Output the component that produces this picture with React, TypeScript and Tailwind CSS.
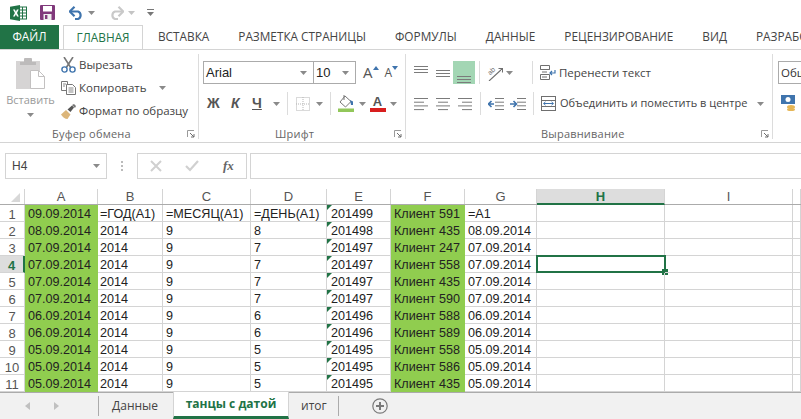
import React from "react";

const COLS = ["A", "B", "C", "D", "E", "F", "G", "H", "I", ""];
const colWidth = [
  "w-[73px]",
  "w-[65px]",
  "w-[88px]",
  "w-[76px]",
  "w-[64px]",
  "w-[74px]",
  "w-[72px]",
  "w-[128px]",
  "w-[128px]",
  "w-[8px]",
];

const ROWS = [
  ["09.09.2014", "=ГОД(A1)", "=МЕСЯЦ(A1)", "=ДЕНЬ(A1)", "201499", "Клиент 591", "=A1"],
  ["08.09.2014", "2014", "9", "8", "201498", "Клиент 435", "08.09.2014"],
  ["07.09.2014", "2014", "9", "7", "201497", "Клиент 247", "07.09.2014"],
  ["07.09.2014", "2014", "9", "7", "201497", "Клиент 558", "07.09.2014"],
  ["07.09.2014", "2014", "9", "7", "201497", "Клиент 435", "07.09.2014"],
  ["07.09.2014", "2014", "9", "7", "201497", "Клиент 590", "07.09.2014"],
  ["06.09.2014", "2014", "9", "6", "201496", "Клиент 588", "06.09.2014"],
  ["06.09.2014", "2014", "9", "6", "201496", "Клиент 589", "06.09.2014"],
  ["05.09.2014", "2014", "9", "5", "201495", "Клиент 558", "05.09.2014"],
  ["05.09.2014", "2014", "9", "5", "201495", "Клиент 586", "05.09.2014"],
  ["05.09.2014", "2014", "9", "5", "201495", "Клиент 435", "05.09.2014"],
];

const TABS = ["ВСТАВКА", "РАЗМЕТКА СТРАНИЦЫ", "ФОРМУЛЫ", "ДАННЫЕ", "РЕЦЕНЗИРОВАНИЕ", "ВИД", "РАЗРАБОТЧИК"];

function Caret({ className = "" }: { className?: string }) {
  return (
    <svg width="7" height="4" viewBox="0 0 7 4" className={"shrink-0 " + className}>
      <path d="M0 0h7L3.5 4z" fill="#8a8a8a" />
    </svg>
  );
}

function Launcher() {
  return (
    <svg width="8" height="8" viewBox="0 0 8 8" className="shrink-0">
      <path d="M.5 7V.5H7" fill="none" stroke="#9a9a9a" />
      <path d="M3 3l4 4M7 4v3H4" fill="none" stroke="#6d6d6d" />
    </svg>
  );
}

function Sep({ className = "" }: { className?: string }) {
  return <div className={"w-px h-[23px] bg-[#dcdcdc] shrink-0 " + className} />;
}

function Lines({ widths, aligned }: { widths: number[]; aligned: "l" | "c" | "r" }) {
  return (
    <svg width="14" height="14" viewBox="0 0 14 14" className="shrink-0">
      {widths.map((w, i) => {
        const x = aligned === "l" ? 0 : aligned === "r" ? 14 - w : (14 - w) / 2;
        return <rect key={i} x={x} y={1 + i * 3.7} width={w} height="1" fill="#7b7b7b" />;
      })}
    </svg>
  );
}

function VAlign({ top }: { top: number }) {
  return (
    <svg width="14" height="14" viewBox="0 0 14 14" className="shrink-0">
      {[0, 3, 6].map((d) => (
        <rect key={d} x="0" y={top + d} width="14" height="1" fill="#7b7b7b" />
      ))}
    </svg>
  );
}

function Indent({ flip }: { flip?: boolean }) {
  return (
    <svg width="16" height="12" viewBox="0 0 16 12" className="shrink-0">
      <path d="M7 .5h9M7 4.2h9M7 7.8h9M7 11.5h9" stroke="#7b7b7b" fill="none" />
      {flip ? (
        <path d="M0 6h6M3.5 3l3 3-3 3" stroke="#3f74ad" strokeWidth="1.6" fill="none" />
      ) : (
        <path d="M6 6H0.5M3.5 3l-3 3 3 3" stroke="#3f74ad" strokeWidth="1.6" fill="none" />
      )}
    </svg>
  );
}

function ExcelLogo() {
  return (
    <svg width="17" height="16" viewBox="0 0 17 16">
      <rect x="8" y="2" width="8.5" height="12" fill="#fff" stroke="#217346" />
      <path d="M9 5h7M9 8h7M9 11h7M12.5 2v12" stroke="#217346" />
      <path d="M0 1.7L10 0v16L0 14.3z" fill="#217346" />
      <path d="M3 4.6h1.9l1 2.2 1-2.2h1.8L7 8l1.8 3.4H7L5.9 9.2 4.8 11.4H3L4.9 8z" fill="#fff" />
    </svg>
  );
}

function SaveIcon() {
  return (
    <svg width="15" height="15" viewBox="0 0 15 15">
      <rect width="15" height="15" rx="1" fill="#80397b" />
      <rect x="3" y="1" width="9" height="5.5" fill="#fff" />
      <rect x="3.5" y="9" width="8" height="6" fill="#eee" />
      <rect x="5" y="10" width="2.4" height="4" fill="#80397b" />
    </svg>
  );
}

function UndoIcon({ color, mirror }: { color: string; mirror?: boolean }) {
  return (
    <svg width="15" height="14" viewBox="0 0 15 14" className={mirror ? "-scale-x-100" : ""}>
      <path d="M2 5.5h7a4 4 0 0 1 0 7.5H6" fill="none" stroke={color} strokeWidth="2.2" />
      <path d="M5.5 0.8L0.8 5.5l4.7 4.7" fill="none" stroke={color} strokeWidth="2.2" />
    </svg>
  );
}

function PasteIcon() {
  return (
    <svg width="29" height="31" viewBox="0 0 29 31">
      <rect x="0" y="3" width="24" height="28" fill="#d6d4d4" />
      <rect x="8" y="0" width="8" height="6" rx="1" fill="#bdbbbb" />
      <rect x="4" y="4" width="16" height="3" fill="#bdbbbb" />
      <path d="M14.5 12.5h8l6 6v12h-14z" fill="#fff" stroke="#c3c1c1" />
      <path d="M22.5 12.5v6h6" fill="none" stroke="#c3c1c1" />
    </svg>
  );
}

function ScissorsIcon() {
  return (
    <svg width="15" height="16" viewBox="0 0 15 16">
      <path d="M3 0l7 11M12 0L5 11" stroke="#777" strokeWidth="1.6" fill="none" />
      <circle cx="3.5" cy="12.5" r="2.6" fill="#fff" stroke="#3f74ad" strokeWidth="1.4" />
      <circle cx="11.5" cy="12.5" r="2.6" fill="#fff" stroke="#3f74ad" strokeWidth="1.4" />
    </svg>
  );
}

function CopyIcon() {
  return (
    <svg width="15" height="14" viewBox="0 0 15 14">
      <path d="M.5.5h6v9h-6z" fill="#fff" stroke="#777" />
      <path d="M5.5 3.5h6l3 3v7h-9z" fill="#fff" stroke="#777" />
      <path d="M7.5 7h5M7.5 9h5M7.5 11h5M2 3h3M2 5h2" stroke="#888" />
    </svg>
  );
}

function BrushIcon() {
  return (
    <svg width="16" height="15" viewBox="0 0 16 15">
      <path d="M0 10.5l5-4.5 4.5 4.5-3 4.5C4 15 1.5 13 0 10.5z" fill="#dcb67a" />
      <path d="M6.5 5.5L11 1.5l2 2-3.5 4.5z" fill="#555" />
      <path d="M11 1l2-1 2 2-1 2z" fill="#777" />
    </svg>
  );
}

function BorderIcon() {
  return (
    <svg width="14" height="14" viewBox="0 0 14 14">
      <rect x=".5" y=".5" width="13" height="13" fill="none" stroke="#b5b5b5" strokeDasharray="1 1" />
      <path d="M7 0v14M0 7h14" stroke="#b5b5b5" strokeDasharray="1 1" />
    </svg>
  );
}

function FillIcon() {
  return (
    <svg width="16" height="17" viewBox="0 0 16 17">
      <path d="M7 1l6 5.5L7.5 12 2 7z" fill="#fff" stroke="#777" />
      <path d="M6 0v5" stroke="#777" />
      <path d="M12 5l3 1.5V10h-2z" fill="#3f74ad" />
      <rect y="13.5" width="16" height="3.5" fill="#92c75a" />
    </svg>
  );
}

function WrapIcon() {
  return (
    <svg width="16" height="15" viewBox="0 0 16 15">
      <path d="M.5.5h9v4h-9zM.5 4.5h9M.5 9.5h9v5h-9zM2 7h5M2 12h5" fill="none" stroke="#6f6f6f" />
      <path d="M15 5v3h-5M12 6l-2 2 2 2" fill="none" stroke="#3f74ad" strokeWidth="1.2" />
    </svg>
  );
}

function MergeIcon() {
  return (
    <svg width="15" height="15" viewBox="0 0 15 15">
      <rect x=".5" y=".5" width="14" height="14" fill="#fff" stroke="#6f6f6f" />
      <path d="M.5 4.5h14M.5 10.5h14" stroke="#6f6f6f" />
      <path d="M2.5 7.5h10M4.5 5.8L2.7 7.5l1.8 1.7M10.5 5.8l1.8 1.7-1.8 1.7" fill="none" stroke="#3f74ad" />
    </svg>
  );
}

function OrientIcon() {
  return (
    <svg width="16" height="16" viewBox="0 0 16 16">
      <path d="M2 16L15 4M11.5 3.5H15.5V7.5" fill="none" stroke="#6f6f6f" strokeWidth="1.1" />
      <text x="1" y="9" fontSize="7" fill="#6f6f6f" fontFamily="Liberation Sans, sans-serif" transform="rotate(-45 4 7)">ab</text>
    </svg>
  );
}

function GroupLabel({ children, pad = "justify-center" }: { children: React.ReactNode; pad?: string }) {
  return (
    <div className={"h-[10px] shrink-0 flex items-center relative text-[#666] text-[11px] tracking-[0.2px] " + pad}>
      {children}
      <div className="absolute right-[3px] top-[1px] flex">
        <Launcher />
      </div>
    </div>
  );
}

function ClipboardGroup() {
  return (
    <div className="w-[199px] shrink-0 border-r border-[#dcdcdc] flex flex-col text-[#444]">
      <div className="flex h-[75px] shrink-0">
        <div className="w-[61px] shrink-0 flex flex-col items-center pt-[4px] text-[#9a9a9a] text-[11px]">
          <PasteIcon />
          <span className="mt-[3px] leading-[16px]">Вставить</span>
          <Caret className="mt-[5px]" />
        </div>
        <div className="flex flex-col pt-[3px] gap-[7px]">
          <div className="flex items-center gap-[3px] h-[16px]">
            <ScissorsIcon />
            <span>Вырезать</span>
          </div>
          <div className="flex items-center gap-[3px] h-[16px]">
            <CopyIcon />
            <span>Копировать</span>
            <Caret className="ml-[9px]" />
          </div>
          <div className="flex items-center gap-[2px] h-[16px]">
            <BrushIcon />
            <span>Формат по образцу</span>
          </div>
        </div>
      </div>
      <GroupLabel pad="pl-[52px]">Буфер обмена</GroupLabel>
    </div>
  );
}

function FontGroup() {
  return (
    <div className="w-[207px] shrink-0 border-r border-[#dcdcdc] flex flex-col text-[#444]">
      <div className="flex flex-col h-[75px] shrink-0 pl-[4px] pt-[7px]">
        <div className="flex items-center h-[23px]">
          <div className="w-[111px] h-[23px] border border-[#ababab] flex items-center justify-between pl-[2px] pr-[6px] bg-white font-['Liberation_Sans',sans-serif] text-[13px] text-[#222]">
            Arial
            <Caret />
          </div>
          <div className="w-[43px] h-[23px] -ml-px border border-[#ababab] flex items-center justify-between pl-[2px] pr-[6px] bg-white font-['Liberation_Sans',sans-serif] text-[13px] text-[#222]">
            10
            <Caret />
          </div>
          <span className="ml-[7px] text-[15px] leading-none text-[#555]">A</span>
          <svg width="6" height="4" viewBox="0 0 6 4" className="mb-[10px]">
            <path d="M0 4l3-4 3 4z" fill="#3f74ad" />
          </svg>
          <span className="ml-[6px] text-[12px] leading-none text-[#555]">A</span>
          <svg width="6" height="4" viewBox="0 0 6 4" className="mb-[10px]">
            <path d="M0 0l3 4 3-4z" fill="#3f74ad" />
          </svg>
        </div>
        <div className="flex items-center h-[23px] mt-[8px] font-['Liberation_Sans',sans-serif]">
          <span className="ml-[4px] w-[24px] font-bold text-[14px] text-[#555]">Ж</span>
          <span className="w-[21px] font-bold italic text-[14px] text-[#555]">К</span>
          <span className="w-[21px] font-bold underline text-[14px] text-[#555]">Ч</span>
          <Caret />
          <Sep className="ml-[7px]" />
          <div className="ml-[8px]">
            <BorderIcon />
          </div>
          <Caret className="ml-[6px]" />
          <Sep className="ml-[7px]" />
          <div className="ml-[7px]">
            <FillIcon />
          </div>
          <Caret className="ml-[5px]" />
          <div className="ml-[3px] w-[17px] flex flex-col items-center">
            <span className="font-bold text-[13px] leading-[13px] text-[#555]">A</span>
            <div className="w-[16px] h-[4px] bg-[#d81e1e]" />
          </div>
          <Caret className="ml-[4px]" />
        </div>
      </div>
      <GroupLabel pad="pl-[76px]">Шрифт</GroupLabel>
    </div>
  );
}

function AlignGroup() {
  return (
    <div className="w-[367px] shrink-0 border-r border-[#dcdcdc] flex flex-col text-[#444]">
      <div className="flex flex-col h-[75px] shrink-0 pl-[8px] pt-[7px]">
        <div className="flex items-center h-[23px]">
          <VAlign top={0} />
          <div className="ml-[8px]">
            <VAlign top={4} />
          </div>
          <div className="ml-[3px] w-[22px] h-[23px] bg-[#a3d6b4] flex items-end justify-center pb-[1px]">
            <VAlign top={7} />
          </div>
          <Sep className="ml-[4px]" />
          <div className="ml-[7px]">
            <OrientIcon />
          </div>
          <Caret className="ml-[3px]" />
          <Sep className="ml-[19px]" />
          <div className="ml-[7px]">
            <WrapIcon />
          </div>
          <span className="ml-[3px]">Перенести текст</span>
        </div>
        <div className="flex items-center h-[23px] mt-[8px]">
          <Lines widths={[14, 10, 14, 10]} aligned="l" />
          <div className="ml-[8px]">
            <Lines widths={[14, 10, 14, 10]} aligned="c" />
          </div>
          <div className="ml-[8px]">
            <Lines widths={[14, 10, 14, 10]} aligned="r" />
          </div>
          <Sep className="ml-[8px]" />
          <div className="ml-[7px]">
            <Indent />
          </div>
          <div className="ml-[6px]">
            <Indent flip />
          </div>
          <Sep className="ml-[7px]" />
          <div className="ml-[7px]">
            <MergeIcon />
          </div>
          <span className="ml-[4px] text-[11px]">Объединить и поместить в центре</span>
          <Caret className="ml-[10px]" />
        </div>
      </div>
      <GroupLabel pad="pl-[135px]">Выравнивание</GroupLabel>
    </div>
  );
}

function NumberGroup() {
  return (
    <div className="flex-1 min-w-0 overflow-hidden pl-[5px] pt-[7px] flex flex-col text-[#333]">
      <div className="w-[40px] h-[23px] shrink-0 border-l border-t border-b border-[#ababab] pl-[2px] flex items-center overflow-hidden">Общий</div>
      <div className="mt-[11px] ml-[3px]">
        <svg width="14" height="16" viewBox="0 0 14 16">
          <rect width="14" height="9" fill="#3f74ad" />
          <circle cx="7" cy="4.5" r="2.5" fill="#fff" />
          <ellipse cx="10" cy="12" rx="4" ry="2" fill="#e6b656" />
          <ellipse cx="10" cy="14.5" rx="4" ry="1.5" fill="#e6b656" />
        </svg>
      </div>
    </div>
  );
}

function FormulaBar() {
  return (
    <div className="mt-[10px] h-[26px] shrink-0 flex items-stretch pl-[5px]">
      <div className="w-[102px] border border-[#d4d4d4] flex items-center justify-between pl-[6px] pr-[6px] font-['Liberation_Sans',sans-serif] text-[12px] text-[#444]">
        H4
        <Caret />
      </div>
      <div className="w-[30px] flex flex-col items-center justify-center gap-[2px]">
        <div className="w-[2px] h-[2px] bg-[#bbb]" />
        <div className="w-[2px] h-[2px] bg-[#bbb]" />
        <div className="w-[2px] h-[2px] bg-[#bbb]" />
      </div>
      <div className="w-[110px] border border-[#d4d4d4] flex items-center">
        <svg width="12" height="12" viewBox="0 0 12 12" className="ml-[12px]">
          <path d="M1 1l10 10M11 1L1 11" stroke="#d0d0d0" strokeWidth="2" />
        </svg>
        <svg width="14" height="12" viewBox="0 0 14 12" className="ml-[23px]">
          <path d="M1 6l4 4 8-9" fill="none" stroke="#d0d0d0" strokeWidth="2.2" />
        </svg>
        <span className="ml-[24px] font-['Liberation_Serif',serif] italic font-bold text-[13px] text-[#666]">fx</span>
      </div>
      <div className="flex-1 ml-[3px] border-t border-b border-l border-[#d4d4d4]" />
    </div>
  );
}

function Sheet() {
  return (
    <div className="mt-[10px] shrink-0 font-['Liberation_Sans',sans-serif] text-[12.6px] text-[#222]">
      <div className="flex h-[16px] border-b border-[#ababab]">
        <div className="w-[25px] shrink-0 border-r border-[#d4d4d4] flex items-end justify-end pr-[4px] pb-[2px]">
          <svg width="9" height="9" viewBox="0 0 9 9">
            <path d="M9 0v9H0z" fill="#d8d8d8" />
          </svg>
        </div>
        {COLS.map((c, i) => (
          <div
            key={i}
            className={
              colWidth[i] +
              " shrink-0 border-r flex items-center justify-center leading-none text-[13px] " +
              (c === "H"
                ? "bg-[#dddddd] text-[#217346] font-bold border-[#d4d4d4] border-b-2 border-b-[#217346] h-[16px]"
                : "text-[#555] border-[#d4d4d4]")
            }
          >
            {c}
          </div>
        ))}
      </div>
      {ROWS.map((row, r) => (
        <div key={r} className="flex h-[17px]">
          <div
            className={
              "w-[25px] shrink-0 flex items-center justify-center pt-[2px] text-[13px] leading-none border-b border-[#d4d4d4] " +
              (r === 3
                ? "bg-[#dddddd] text-[#217346] font-bold border-r-2 border-r-[#217346]"
                : "text-[#555] border-r")
            }
          >
            {r + 1}
          </div>
          {COLS.map((_, c) => {
            const filled = c === 0 || c === 5;
            return (
              <div
                key={c}
                className={
                  colWidth[c] +
                  " shrink-0 relative leading-[19px] whitespace-nowrap border-b border-r " +
                  (c === 1 ? "pl-[2px] " : c === 4 ? "pl-[4px] " : "pl-[3px] ") +
                  (filled ? "bg-[#90cd4f] border-[#90cd4f]" : "border-[#d4d4d4]")
                }
              >
                {row[c]}
                {c === 4 && (
                  <svg width="5" height="5" viewBox="0 0 5 5" className="absolute left-0 top-0">
                    <path d="M0 0h5L0 5z" fill="#217346" />
                  </svg>
                )}
                {c === 7 && r === 3 && (
                  <div className="absolute -left-px -top-px w-[130px] h-[18px] border-2 border-[#217346]">
                    <div className="absolute -right-[4px] -bottom-[4px] w-[6px] h-[6px] bg-[#217346]" />
                  </div>
                )}
              </div>
            );
          })}
        </div>
      ))}
    </div>
  );
}

function SheetTabs() {
  return (
    <div className="flex-1 border-t border-[#ababab] bg-[#f1f1f1] flex items-stretch text-[12px] text-[#444] font-['Open_Sans',sans-serif]">
      <div className="w-[98px] shrink-0 flex items-center pl-[25px] gap-[24px] my-[3px]">
        <svg width="5" height="8" viewBox="0 0 5 8">
          <path d="M5 0v8L0 4z" fill="#c0c0c0" />
        </svg>
        <svg width="5" height="8" viewBox="0 0 5 8">
          <path d="M0 0v8l5-4z" fill="#c0c0c0" />
        </svg>
      </div>
      <div className="w-[75px] shrink-0 border-l border-[#ababab] my-[3px] flex items-center pl-[13px]">Данные</div>
      <div className="w-[116px] shrink-0 bg-white border-x border-[#d4d4d4] border-b-[3px] border-b-[#217346] flex items-center justify-center font-bold text-[#217346] -mt-px">
        танцы с датой
      </div>
      <div className="w-[50px] shrink-0 border-r border-[#ababab] my-[3px] flex items-center pl-[12px]">итог</div>
      <div className="ml-[33px] flex items-center">
        <svg width="16" height="16" viewBox="0 0 16 16">
          <circle cx="8" cy="8" r="7.2" fill="none" stroke="#7a7a7a" strokeWidth="1.2" />
          <path d="M4 8h8M8 4v8" stroke="#7a7a7a" strokeWidth="2" />
        </svg>
      </div>
    </div>
  );
}

export default function App() {
  return (
    <div className="w-[801px] h-[419px] overflow-hidden bg-white flex flex-col font-['Open_Sans',sans-serif] text-[11.5px]">
      {/* quick access */}
      <div className="h-[25px] shrink-0 flex items-center pl-[10px]">
        <ExcelLogo />
        <div className="ml-[13px]">
          <SaveIcon />
        </div>
        <div className="ml-[14px]">
          <UndoIcon color="#3f74ad" />
        </div>
        <Caret className="ml-[4px]" />
        <div className="ml-[14px]">
          <UndoIcon color="#c9c9c9" mirror />
        </div>
        <Caret className="ml-[4px] opacity-50" />
        <svg width="7" height="7" viewBox="0 0 7 7" className="ml-[12px]">
          <path d="M0 0h7v1H0zM0 3h7L3.5 7z" fill="#777" />
        </svg>
      </div>

      {/* tabs */}
      <div className="h-[25px] shrink-0 flex items-stretch border-b border-[#d4d4d4] text-[11.8px] text-[#444] whitespace-nowrap overflow-hidden">
        <div className="w-[59px] shrink-0 bg-[#217346] text-white flex items-center justify-center">ФАЙЛ</div>
        <div className="w-[80px] shrink-0 ml-[4px] bg-white border-x border-t border-[#d4d4d4] h-[25px] text-[#217346] flex items-center justify-center">
          ГЛАВНАЯ
        </div>
        <div className="flex items-center gap-[29px] ml-[15px]">
          {TABS.map((t) => (
            <span key={t}>{t}</span>
          ))}
        </div>
      </div>

      {/* ribbon */}
      <div className="h-[93px] shrink-0 flex border-b border-[#d4d4d4] whitespace-nowrap pt-[4px] pb-[3px]">
        <ClipboardGroup />
        <FontGroup />
        <AlignGroup />
        <NumberGroup />
      </div>

      <FormulaBar />
      <Sheet />
      <SheetTabs />
    </div>
  );
}
